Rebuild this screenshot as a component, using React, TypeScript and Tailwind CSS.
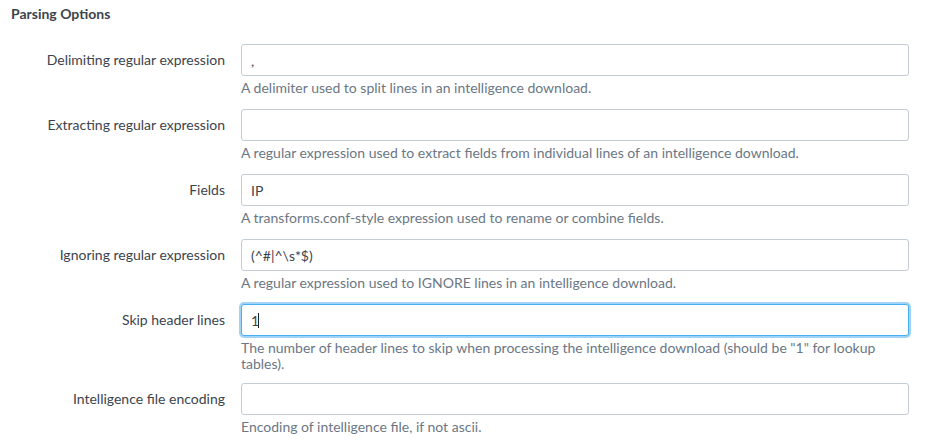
import React from "react";

const fields = [
  {
    label: "Delimiting regular expression",
    value: ",",
    help: "A delimiter used to split lines in an intelligence download.",
  },
  {
    label: "Extracting regular expression",
    value: "",
    help: "A regular expression used to extract fields from individual lines of an intelligence download.",
  },
  {
    label: "Fields",
    value: "IP",
    help: "A transforms.conf-style expression used to rename or combine fields.",
  },
  {
    label: "Ignoring regular expression",
    value: "(^#|^\\s*$)",
    help: "A regular expression used to IGNORE lines in an intelligence download.",
  },
  {
    label: "Skip header lines",
    value: "1",
    focused: true,
    help: (
      <>
        The number of header lines to skip when processing the intelligence download (should be "1" for lookup
        <br />
        tables).
      </>
    ),
  },
  {
    label: "Intelligence file encoding",
    value: "",
    help: "Encoding of intelligence file, if not ascii.",
  },
];

export default function App() {
  return (
    <div
      className="w-[926px] h-[448px] bg-white overflow-hidden pl-[11px] pt-[5px] text-[14px] text-[#3c444d]"
      style={{ fontFamily: "Lato, 'Open Sans', sans-serif" }}
    >
      <h2 className="font-bold text-[14px] leading-[18px] text-[#3c444d]">Parsing Options</h2>
      <div className="mt-[21px] flex flex-col gap-[13px]">
        {fields.map((f) => (
          <div key={f.label} className="flex">
            <label className="w-[230px] pr-[16px] text-right h-[32px] leading-[32px] shrink-0">
              {f.label}
            </label>
            <div className="flex flex-col">
              <div className="relative">
                <input
                  readOnly
                  value={f.value}
                  className={
                    f.focused
                      ? "w-[668px] h-[32px] px-[9px] rounded-[3px] border border-[#4aaef2] shadow-[0_0_0_2px_#9fd4f8] outline-none text-[#3c444d] bg-white"
                      : "w-[668px] h-[32px] px-[9px] rounded-[3px] border border-[#c3cbd4] outline-none text-[#3c444d] bg-white"
                  }
                />
                {f.focused && (
                  <span className="absolute left-[17px] top-[9px] w-px h-[15px] bg-[#222]" />
                )}
              </div>
              <p
                className={
                  f.focused
                    ? "mt-[4px] -mb-[2px] leading-[16px] text-[#6b7785] whitespace-nowrap"
                    : "mt-[4px] leading-[16px] text-[#6b7785] whitespace-nowrap"
                }
              >
                {f.help}
              </p>
            </div>
          </div>
        ))}
      </div>
    </div>
  );
}
